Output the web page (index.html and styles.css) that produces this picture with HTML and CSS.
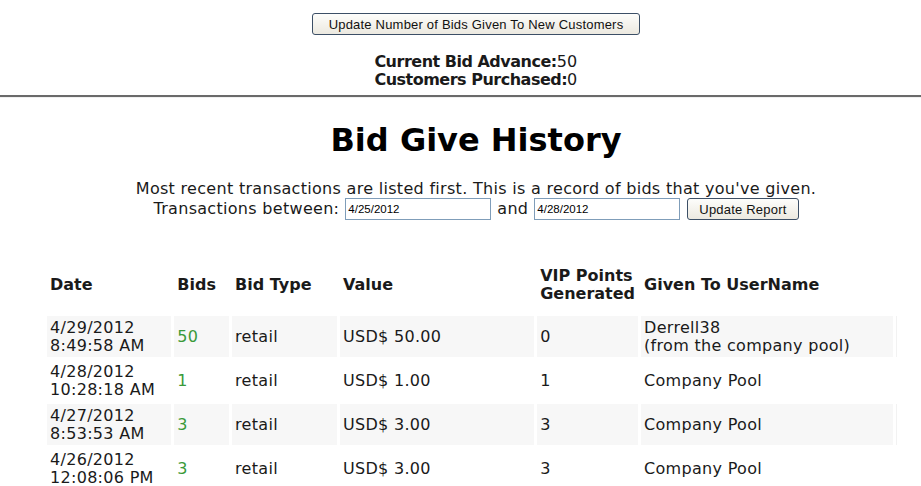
FILE: index.html
```html
<html>
<head>
<title>Bid Give History</title>
<meta charset="utf-8">
<link rel="stylesheet" href="styles.css">
</head>
<body>

<div class="page">
  <div class="top">
    <button class="btn btn-wide">Update Number of Bids Given To New Customers</button>
    <div class="stats">
      <b>Current Bid Advance:</b>50<br>
      <b>Customers Purchased:</b>0
    </div>
  </div>
</div>

<hr class="rule">

<div class="page">
  <h1>Bid Give History</h1>

  <div class="intro">
    <div class="intro-line">Most recent transactions are listed first. This is a record of bids that you've given.</div>
    <div class="intro-line filter">
      <span>Transactions between:</span>
      <input class="date" type="text" value="4/25/2012">
      <span>and</span>
      <input class="date" type="text" value="4/28/2012">
      <button class="btn">Update Report</button>
    </div>
  </div>

  <table class="history">
    <tr>
      <th class="c-date">Date</th>
      <th class="c-bids">Bids</th>
      <th class="c-type">Bid Type</th>
      <th class="c-value">Value</th>
      <th class="c-vip">VIP Points Generated</th>
      <th class="c-user">Given To UserName</th>
      <th class="c-end"></th>
    </tr>
    <tr class="alt">
      <td>4/29/2012<br>8:49:58 AM</td>
      <td class="bids">50</td>
      <td>retail</td>
      <td>USD$ 50.00</td>
      <td>0</td>
      <td>Derrell38<br>(from the company pool)</td>
      <td class="c-end"></td>
    </tr>
    <tr>
      <td>4/28/2012<br>10:28:18 AM</td>
      <td class="bids">1</td>
      <td>retail</td>
      <td>USD$ 1.00</td>
      <td>1</td>
      <td>Company Pool</td>
      <td class="c-end"></td>
    </tr>
    <tr class="alt">
      <td>4/27/2012<br>8:53:53 AM</td>
      <td class="bids">3</td>
      <td>retail</td>
      <td>USD$ 3.00</td>
      <td>3</td>
      <td>Company Pool</td>
      <td class="c-end"></td>
    </tr>
    <tr>
      <td>4/26/2012<br>12:08:06 PM</td>
      <td class="bids">3</td>
      <td>retail</td>
      <td>USD$ 3.00</td>
      <td>3</td>
      <td>Company Pool</td>
      <td class="c-end"></td>
    </tr>
  </table>
</div>

</body>
</html>
```

FILE: styles.css
```css
body {
  margin: 0;
  font-family: "DejaVu Sans", Verdana, sans-serif;
  font-size: 16px;
  color: #1a1a1a;
}

.page {
  padding-left: 31px;
  text-align: center;
}

.top {
  padding-top: 13px;
}

.btn {
  font-family: "Liberation Sans", Arial, sans-serif;
  font-size: 13px;
  letter-spacing: 0.2px;
  color: #111;
  height: 22px;
  padding: 0 11px;
  border: 1px solid #3c4f66;
  border-radius: 3px;
  background: linear-gradient(#fdfdfb, #ece9e0);
}

.btn-wide {
  padding: 0 16px;
}

.stats {
  margin-top: 18px;
  line-height: 18px;
  letter-spacing: 0.3px;
}

.stats b {
  font-weight: bold;
  letter-spacing: -0.5px;
}

.rule {
  margin: 6px 0 0 0;
  border: 0;
  border-top: 2px solid #6a6a6a;
  border-bottom: 1px solid #f0f0f0;
  height: 0;
}

h1 {
  font-size: 32px;
  font-weight: bold;
  margin: 22px 0 0 0;
  line-height: 40px;
  color: #000;
}

.intro {
  margin-top: 19px;
  letter-spacing: 0.3px;
}

.intro-line {
  line-height: 20px;
}

.filter {
  display: flex;
  justify-content: center;
  align-items: center;
  gap: 6px;
  height: 22px;
  margin-top: -1px;
}

.date {
  width: 146px;
  height: 22px;
  box-sizing: border-box;
  font-family: "Liberation Sans", Arial, sans-serif;
  font-size: 11.5px;
  letter-spacing: 0;
  border: 1px solid #7f9db9;
  padding: 1px 2px;
}

.filter .btn {
  margin-left: 1px;
}

/* table */
.history {
  margin: 44px auto 0 auto;
  border-spacing: 3px;
  text-align: left;
  width: 864px;
  letter-spacing: 0.3px;
}

.history th {
  font-weight: bold;
  letter-spacing: 0;
  line-height: 18px;
  padding: 0 3px 10px 3px;
  vertical-align: middle;
}

.history td {
  line-height: 18px;
  padding: 3px 3px 2px 3px;
  height: 36px;
  vertical-align: middle;
}

.history tr.alt td {
  background: #f7f7f7;
}

.history tr.alt td.c-end {
  background: none;
  border-left: 1px solid #f2f2f2;
}

.c-date { width: 119px; }
.c-bids { width: 49px; }
.c-type { width: 100px; }
.c-value { width: 191px; }
.c-vip { width: 90px; }
.c-user { width: 249px; }
.c-end { width: 2px; padding: 0; }

.bids {
  color: #3a9a3a;
}
```
